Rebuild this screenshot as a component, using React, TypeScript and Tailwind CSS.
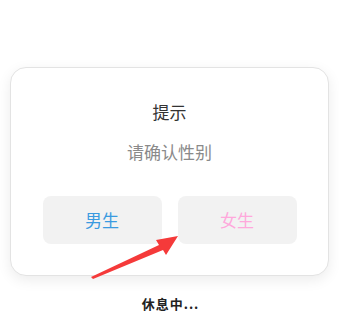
import React from 'react';

export default function App() {
  return (
    <div
      className="relative w-[339px] h-[330px] bg-white overflow-hidden"
      style={{ fontFamily: '"Noto Sans CJK SC", "Noto Sans", sans-serif' }}
    >
      <div className="ml-[10px] mt-[67px] w-[319px] h-[209px] rounded-[16px] border border-[#e3e3e3] bg-white shadow-[0_4px_14px_rgba(0,0,0,0.08)] flex flex-col items-center pt-[33px]">
        <div className="text-[17px] leading-[22px] text-[#333]">提示</div>
        <div className="mt-[18px] text-[17px] leading-[22px] text-[#8a8a8a]">请确认性别</div>
        <div className="mt-[33px] flex gap-[16px]">
          <button className="w-[119px] h-[48px] rounded-[8px] bg-[#f2f2f2] text-[17px] text-[#3a9ae0]">男生</button>
          <button className="w-[119px] h-[48px] rounded-[8px] bg-[#f2f2f2] text-[17px] text-[#ffa8dc]">女生</button>
        </div>
      </div>
      <div className="mt-[18px] text-center pl-[2px] text-[13px] font-bold text-[#222] tracking-[1px]">休息中...</div>
      {/* red pointer arrow */}
      <svg className="absolute left-0 top-0" width="339" height="330" viewBox="0 0 339 330">
        <polygon
          points="91,277 159,245 156,240 178,236 166,255 163,250 93,279"
          fill="#f53a3a"
        />
      </svg>
    </div>
  );
}
